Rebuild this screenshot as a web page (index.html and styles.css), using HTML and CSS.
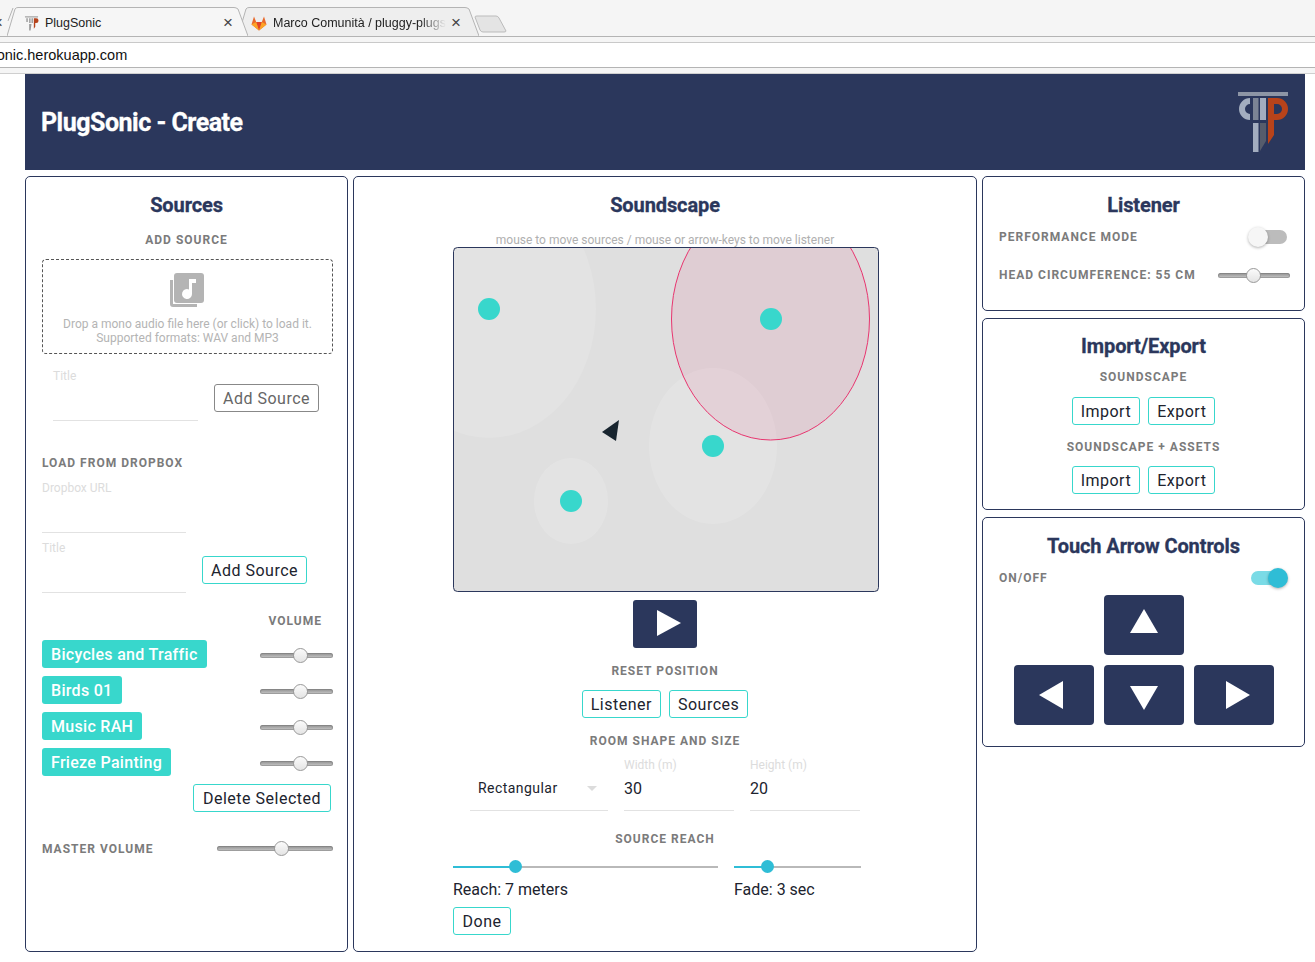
FILE: index.html
```html
<!DOCTYPE html>
<html>
<head>
    <meta charset="utf-8" />
    <title>PlugSonic - Create</title>
    <link rel="stylesheet" href="styles.css">
</head>
<body>
    <div class="chrome">
        <div class="tabs">
            <div class="tab tab-old">
                <svg class="tab-bg" width="16" height="29"><path d="M13 1 8 14" fill="none" stroke="#b4b4b4" /></svg>
                <span class="x">×</span>
            </div>
            <div class="tab tab-on">
                <svg class="tab-bg" width="241" height="29"><path d="M0 29 L8 2 Q9 .5 11 .5 L227 .5 Q229 .5 231 2 L241 29" fill="#f6f6f6" stroke="#b4b4b4" /></svg>
                <svg class="fav" width="15" height="16" viewBox="0 0 16 16"><path d="M1 1h14v1H1z" fill="#888" /><path d="M4 3H2.500v4H4zM5.500 3H7v5H5.500zM8 3h1.500v5H8zM8 9h-2.500v7H7z" fill="#999" /><path d="M10.500 3h2.500a2.500 2.500 0 0 1 0 5h-1v4l-1.500 2z" fill="#b5431c" /></svg>
                <span class="tab-t">PlugSonic</span>
                <span class="x">×</span>
            </div>
            <div class="tab tab-off">
                <svg class="tab-bg" width="241" height="29"><path d="M0 29 L8 2 Q9 .5 11 .5 L227 .5 Q229 .5 231 2 L241 29" fill="#eee" stroke="#b4b4b4" /></svg>
                <svg class="fav" width="16" height="16" viewBox="0 0 16 16"><path d="M8 15.500 .5 9.500 3 1.500l2.200 5.500h5.600L13 1.500l2.500 8z" fill="#e8692c" /><path d="M8 15.500 5.200 7h5.600z" fill="#e24329" /><path d="M8 15.500.5 9.500 5.200 7zM8 15.500l7.500-6L10.800 7z" fill="#fca326" /></svg>
                <span class="tab-t tab-fade">Marco Comunità / pluggy-plugsonic</span>
                <span class="x">×</span>
            </div>
            <svg class="tab-new" width="36" height="20"><path d="M2 3 Q2 2 4 2 L23 2 Q25 2 26 4 L33 17 Q33 18 31 18 L10 18 Q8 18 7 16z" fill="#e4e4e4" stroke="#bbb" /></svg>
        </div>
        <div class="addr"><span class="url">plugsonic.herokuapp.com</span></div>
    </div>

    <div class="page">
        <div class="hd">
            <span class="hd-t">PlugSonic - Create</span>
            <svg class="logo" width="50" height="60" viewBox="0 0 50 60">
                <path d="M0 0h50v4H0z" fill="#8d95a5" />
                <path d="M12 6a11 11 0 0 0 0 22V22a5 5 0 0 1 0-10z" fill="#a3adbf" />
                <path d="M15 6h5.500v22H15z" fill="#7c8495" />
                <path d="M22 6h6v22h-6z" fill="#a3adbf" />
                <path d="M30 6h9a11 11 0 0 1 0 22h-3v15l-6 9z" fill="#b8431a" />
                <path d="M36 12v10h3a5 5 0 0 0 0-10z" fill="#2b375c" />
                <path d="M15 31h5.500v29H15z" fill="#a3adbf" />
                <path d="M22 31h6v18l-6 10z" fill="#565c6c" />
            </svg>
        </div>

        <div class="cols">
            <div class="box left">
                <div class="h">Sources</div>
                <div class="lbl lbl-c lbl-add">ADD SOURCE</div>
                <div class="drop">
                    <svg class="drop-ico" width="34" height="34" viewBox="0 0 34 34">
                        <path d="M7 0h24a3 3 0 0 1 3 3v24a3 3 0 0 1-3 3H7a3 3 0 0 1-3-3V3a3 3 0 0 1 3-3z" fill="#b4b4b4" />
                        <path d="M0 7h3v24h24v3H3a3 3 0 0 1-3-3z" fill="#b4b4b4" />
                        <path d="M19 6h7v4h-4v11a5 5 0 1 1-3-4.500z" fill="#fff" />
                    </svg>
                    <div class="drop-t">Drop a mono audio file here (or click) to load it.<br />Supported formats: WAV and MP3</div>
                </div>
                <div class="add-row add-a">
                    <div class="fld fld-a"><span class="ph">Title</span></div>
                    <span class="btn btn-off">Add Source</span>
                </div>
                <div class="lbl lbl-drop">LOAD FROM DROPBOX</div>
                <div class="fld fld-url"><span class="ph">Dropbox URL</span></div>
                <div class="add-row add-b">
                    <div class="fld fld-url"><span class="ph">Title</span></div>
                    <span class="btn">Add Source</span>
                </div>
                <div class="lbl lbl-vol">VOLUME</div>
                <div class="src"><span class="chip">Bicycles and Traffic</span><div class="rng rng-v"><i style="left:55%"></i></div></div>
                <div class="src"><span class="chip">Birds 01</span><div class="rng rng-v"><i style="left:55%"></i></div></div>
                <div class="src"><span class="chip">Music RAH</span><div class="rng rng-v"><i style="left:55%"></i></div></div>
                <div class="src"><span class="chip">Frieze Painting</span><div class="rng rng-v"><i style="left:55%"></i></div></div>
                <div class="del"><span class="btn">Delete Selected</span></div>
                <div class="master">
                    <span class="lbl">MASTER VOLUME</span>
                    <div class="rng rng-m"><i style="left:55%"></i></div>
                </div>
            </div>

            <div class="box mid">
                <div class="h">Soundscape</div>
                <div class="hint">mouse to move sources / mouse or arrow-keys to move listener</div>
                <svg class="cv" width="426" height="345" viewBox="0 0 426 345">
                    <rect x="0" y="0" width="426" height="345" fill="#dfdfdf" />
                    <ellipse cx="36" cy="62" rx="107" ry="129" fill="#fff" fill-opacity=".13" />
                    <ellipse cx="260" cy="199" rx="64" ry="78" fill="#fff" fill-opacity=".15" />
                    <ellipse cx="118" cy="254" rx="37" ry="43" fill="#fff" fill-opacity=".15" />
                    <ellipse cx="317.500" cy="72" rx="99" ry="121" fill="#e91e63" fill-opacity=".09" stroke="#e8356f" />
                    <circle cx="36" cy="62" r="11" fill="#38d7cc" />
                    <circle cx="318" cy="72" r="11" fill="#38d7cc" />
                    <circle cx="260" cy="199" r="11" fill="#38d7cc" />
                    <circle cx="118" cy="254" r="11" fill="#38d7cc" />
                    <path d="M149 185 166 173 163 194z" fill="#18252f" />
                    <rect x="0.500" y="0.500" width="425" height="344" rx="4" fill="none" stroke="#2b375c" />
                </svg>
                <div class="play"><svg width="26" height="28" viewBox="0 0 26 28"><path d="M1 1 25 14 1 27z" fill="#fff" /></svg></div>
                <div class="lbl lbl-c lbl-reset">RESET POSITION</div>
                <div class="btns"><span class="btn">Listener</span><span class="btn">Sources</span></div>
                <div class="lbl lbl-c lbl-room">ROOM SHAPE AND SIZE</div>
                <div class="room">
                    <div class="fld fld-sel"><span class="val">Rectangular</span><span class="caret"></span></div>
                    <div class="fld fld-n"><span class="ph">Width (m)</span><span class="num">30</span></div>
                    <div class="fld fld-n"><span class="ph">Height (m)</span><span class="num">20</span></div>
                </div>
                <div class="lbl lbl-c lbl-reach">SOURCE REACH</div>
                <div class="reach">
                    <div class="rc rc-a">
                        <div class="sl"><b style="width:23.400%"></b><i style="left:23.400%"></i></div>
                        <div class="rc-t">Reach: 7 meters</div>
                    </div>
                    <div class="rc rc-b">
                        <div class="sl"><b style="width:26%"></b><i style="left:26%"></i></div>
                        <div class="rc-t">Fade: 3 sec</div>
                    </div>
                </div>
                <span class="btn btn-done">Done</span>
            </div>

            <div class="right">
                <div class="box box-l">
                    <div class="h">Listener</div>
                    <div class="opt opt-perf">
                        <span class="lbl">PERFORMANCE MODE</span>
                        <span class="tog"><i></i></span>
                    </div>
                    <div class="opt opt-head">
                        <span class="lbl">HEAD CIRCUMFERENCE: 55 CM</span>
                        <div class="rng rng-h"><i style="left:49%"></i></div>
                    </div>
                </div>
                <div class="box box-i">
                    <div class="h">Import/Export</div>
                    <div class="lbl lbl-c lbl-s1">SOUNDSCAPE</div>
                    <div class="btns"><span class="btn">Import</span><span class="btn">Export</span></div>
                    <div class="lbl lbl-c lbl-s2">SOUNDSCAPE + ASSETS</div>
                    <div class="btns"><span class="btn">Import</span><span class="btn">Export</span></div>
                </div>
                <div class="box box-t">
                    <div class="h">Touch Arrow Controls</div>
                    <div class="opt opt-on">
                        <span class="lbl">ON/OFF</span>
                        <span class="tog tog-on"><i></i></span>
                    </div>
                    <div class="keys">
                        <div class="key-r">
                            <div class="key key-up"><svg width="28" height="24" viewBox="0 0 28 24"><path d="M14 0 28 24H0z" fill="#fff" /></svg></div>
                        </div>
                        <div class="key-r">
                            <div class="key key-lf"><svg width="24" height="28" viewBox="0 0 24 28"><path d="M0 14 24 0V28z" fill="#fff" /></svg></div>
                            <div class="key key-dn"><svg width="28" height="24" viewBox="0 0 28 24"><path d="M0 0H28L14 24z" fill="#fff" /></svg></div>
                            <div class="key key-rt"><svg width="24" height="28" viewBox="0 0 24 28"><path d="M0 0 24 14 0 28z" fill="#fff" /></svg></div>
                        </div>
                    </div>
                </div>
            </div>
        </div>
    </div>
</body>
</html>
```

FILE: styles.css
```css
html, body { margin: 0; padding: 0; }
body { font-family: Roboto, "Liberation Sans", sans-serif; font-size: 16px; color: #20232e; background: #fff; width: 1315px; height: 962px; overflow: hidden; }

/* browser strip */
.chrome { height: 74px; box-sizing: border-box; background: #f5f5f5; border-bottom: 1px solid #cfcfcf; font-family: "Liberation Sans", sans-serif; }
.tabs { display: flex; height: 37px; box-sizing: border-box; border-bottom: 1px solid #b4b4b4; overflow: hidden; font-size: 12.500px; }
.tab { position: relative; height: 36px; display: flex; align-items: center; box-sizing: border-box; padding-top: 9px; flex: none; }
.tab-bg { position: absolute; left: 0; top: 7px; }
.tab-old { width: 7px; z-index: 1; }
.tab-old .x { margin-left: -7px; }
.tab-on { width: 241px; padding-left: 17px; z-index: 2; }
.tab-off { width: 241px; margin-left: -10px; padding-left: 13px; }
.fav { position: relative; margin-right: 6px; flex: none; }
.tab-t { position: relative; flex: 1; overflow: hidden; white-space: nowrap; color: #222; }
.tab-fade { margin-right: 5px; -webkit-mask-image: linear-gradient(to right, #000 85%, transparent); mask-image: linear-gradient(to right, #000 85%, transparent); }
.x { position: relative; font-size: 17px; color: #444; margin-right: 15px; flex: none; }
.tab-off .x { margin-right: 18px; }
.tab-new { margin: 14px 0 0 -6px; flex: none; }
.addr { height: 26px; box-sizing: border-box; margin-top: 5px; border-top: 1px solid #c9c9c9; border-bottom: 1px solid #b4b4b4; overflow: hidden; line-height: 24px; font-size: 14.500px; color: #111; background: #fff; }
.url { display: inline-block; margin-left: -38px; white-space: nowrap; }

/* page */
.page { padding: 0 10px 0 25px; }
.hd { height: 96px; background: #2b375c; display: flex; align-items: center; justify-content: space-between; padding: 0 17px 0 16px; box-sizing: border-box; }
.hd-t { color: #fff; font-size: 25px; font-weight: 700; letter-spacing: -.5px; -webkit-text-stroke: .3px #fff; }
.logo { margin-top: -1px; }
.cols { display: flex; gap: 5px; margin-top: 6px; align-items: flex-start; }
.box { border: 1px solid #2b375c; border-radius: 5px; box-sizing: border-box; background: #fff; }
.left { width: 323px; height: 776px; padding: 0 14px 0 16px; }
.mid { width: 624px; height: 776px; padding: 0 99px; text-align: center; }
.right { width: 323px; display: flex; flex-direction: column; }
.h { font-size: 20px; font-weight: 700; color: #2b375c; text-align: center; line-height: 24px; margin-top: 16px; letter-spacing: -.1px; -webkit-text-stroke: .3px #2b375c; }
.lbl { font-size: 12px; font-weight: 700; letter-spacing: 1px; color: #7b7b7b; line-height: 14px; white-space: nowrap; }
.lbl-c { text-align: center; }
.btn { display: inline-block; box-sizing: border-box; height: 28px; line-height: 27px; padding: 0 8px; font-size: 16px; letter-spacing: .5px; border: 1px solid #38d7cc; border-radius: 3px; color: #20232e; background: #fff; white-space: nowrap; }
.btn-off { border-color: #888; color: #666; }
.btns { display: flex; justify-content: center; gap: 8px; }
.fld { border-bottom: 1px solid #e2e2e2; box-sizing: border-box; }
.ph { display: block; font-size: 12px; line-height: 14px; color: #dcdcdc; text-align: left; }

/* sources column */
.left .h, .lbl-add { margin-right: 2px; }
.lbl-add { margin-top: 16px; }
.drop { height: 95px; margin-top: 12px; border: 1px dashed #555; border-radius: 4px; box-sizing: border-box; text-align: center; padding-top: 13px; }
.drop-ico { display: block; margin: 0 0 0 127px; }
.drop-t { font-size: 12px; line-height: 14px; color: #b4b4b4; margin-top: 10px; }
.add-row { display: flex; align-items: flex-start; }
.add-a { margin-top: 15px; padding-left: 11px; }
.fld-a { width: 145px; height: 52px; margin-right: 16px; }
.add-a .btn { margin-top: 15px; }
.lbl-drop { margin-top: 35px; }
.fld-url { width: 144px; height: 52px; margin-top: 11px; }
.add-b { margin-top: 1px; }
.add-b .fld-url { height: 52px; margin-top: 7px; margin-right: 16px; }
.add-b .btn { margin-top: 22px; }
.lbl-vol { text-align: right; margin: 21px 11px 0 0; }
.src { display: flex; align-items: center; justify-content: space-between; height: 28px; margin-bottom: 8px; }
.lbl-vol + .src { margin-top: 12px; }
.chip { display: inline-block; height: 28px; line-height: 29px; padding: 0 9px; background: #38d7cc; color: #fff; font-size: 16px; font-weight: 500; letter-spacing: .3px; border-radius: 3px; white-space: nowrap; }
.del { text-align: right; padding-right: 2px; }
.del .btn { padding: 0 9px; }
.master { display: flex; align-items: center; justify-content: space-between; margin-top: 30px; }

/* plain range */
.rng { position: relative; height: 5px; border-radius: 3px; background: linear-gradient(#8e8e8e, #c9c9c9); box-shadow: inset 0 0 0 1px rgba(120,120,120,.5); }
.rng i { position: absolute; top: -5px; width: 15px; height: 15px; margin-left: -7px; border-radius: 50%; box-sizing: border-box; border: 1px solid #999; background: linear-gradient(#fbfbfb, #e4e4e4); }
.rng-v { width: 73px; margin-top: 2px; }
.rng-m { width: 116px; margin-bottom: 2px; }
.rng-h { width: 72px; }

/* soundscape column */
.hint { font-size: 12px; line-height: 14px; color: #b0b0b0; white-space: nowrap; margin-top: 16px; height: 7px; }
.cv { display: block; margin-top: 7px; border-radius: 4px; }
.play { width: 64px; height: 48px; margin: 8px auto 0; padding: 0 0 2px 8px; box-sizing: border-box; background: #2b375c; border-radius: 3px; display: flex; align-items: center; justify-content: center; }
.lbl-reset { margin-top: 16px; }
.lbl-reset + .btns { margin-top: 12px; }
.lbl-room { margin-top: 16px; }
.room { display: flex; gap: 16px; margin: 10px 17px 0 17px; text-align: left; }
.fld-sel { width: 138px; height: 53px; flex: none; padding: 20px 0 0 8px; display: flex; justify-content: space-between; }
.val { font-size: 14px; line-height: 20px; letter-spacing: .45px; }
.caret { width: 0; height: 0; margin: 8px 11px 0 0; border: 5px solid transparent; border-top: 5px solid #dcdcdc; border-bottom: 0; }
.fld-n { width: 110px; height: 53px; flex: none; }
.num { display: block; font-size: 16px; line-height: 20px; margin-top: 7px; }
.lbl-reach { margin-top: 21px; }
.reach { display: flex; gap: 16px; margin-top: 20px; text-align: left; }
.rc-a { width: 265px; }
.rc-b { width: 127px; }
.sl { position: relative; height: 2px; background: #b9b9b9; }
.sl b { position: absolute; left: 0; top: 0; height: 2px; background: #2fbdd6; }
.sl i { position: absolute; top: -6px; width: 13px; height: 13px; margin-left: -6px; border-radius: 50%; background: #2fbdd6; }
.rc-t { font-size: 16px; line-height: 20px; margin-top: 12px; }
.btn-done { display: block; width: 58px; margin-top: 7px; text-align: center; padding: 0; }

/* right column */
.box-l { height: 135px; padding: 0 16px; }
.box-i { height: 192px; margin-top: 7px; }
.box-i .h { margin-top: 15px; }
.box-t { height: 230px; margin-top: 7px; padding: 0 16px; }
.opt { display: flex; align-items: center; justify-content: space-between; height: 18px; }
.opt-perf { margin-top: 11px; padding-right: 1px; }
.opt-head { margin-top: 20px; margin-right: -2px; }
.opt-on { margin-top: 11px; padding-right: 1px; }
.tog { position: relative; display: block; width: 36px; height: 14px; border-radius: 7px; background: #bcbcbc; }
.tog i { position: absolute; left: -3px; top: -3px; width: 20px; height: 20px; border-radius: 50%; background: #f6f6f6; box-shadow: 0 1px 3px rgba(0,0,0,.3); }
.tog-on { background: #7adbe6; }
.tog-on i { left: 17px; background: #2fbdd6; }
.lbl-s1 { margin-top: 12px; }
.lbl-s1 + .btns { margin-top: 13px; }
.lbl-s2 { margin-top: 15px; }
.lbl-s2 + .btns { margin-top: 12px; }
.keys { display: flex; flex-direction: column; align-items: center; gap: 10px; margin-top: 8px; }
.key-r { display: flex; gap: 10px; }
.key { width: 80px; height: 60px; box-sizing: border-box; background: #2b375c; border-radius: 4px; display: flex; align-items: center; justify-content: center; }
.key-lf { padding-right: 6px; }
.key-rt { padding-left: 8px; }
.key-up { padding-bottom: 9px; }
.key-dn { padding-top: 5px; }
```
